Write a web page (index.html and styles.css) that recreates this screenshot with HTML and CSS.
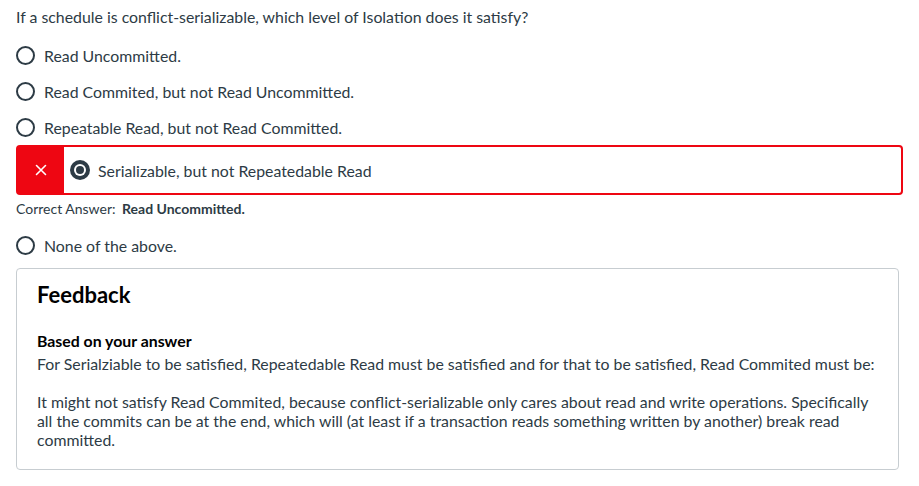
FILE: index.html
```html
<!DOCTYPE html>
<html>
<head>
<meta charset="utf-8">
<link rel="stylesheet" href="styles.css">
</head>
<body>
<div class="quiz">
  <p class="question">If a schedule is conflict-serializable, which level of Isolation does it satisfy?</p>
  <div class="answers">
    <div class="answer">
      <span class="radio"></span><span class="label">Read Uncommitted.</span>
    </div>
    <div class="answer">
      <span class="radio"></span><span class="label">Read Commited, but not Read Uncommitted.</span>
    </div>
    <div class="answer">
      <span class="radio"></span><span class="label">Repeatable Read, but not Read Committed.</span>
    </div>
    <div class="wrong">
      <div class="wrong-flag">
        <svg width="12" height="12" viewBox="0 0 12 12"><path d="M1.5 1.5 L10.5 10.5 M10.5 1.5 L1.5 10.5" stroke="#fff" stroke-width="1.6" stroke-linecap="round"/></svg>
      </div>
      <div class="wrong-body">
        <svg class="radio-on" width="20" height="20" viewBox="0 0 20 20"><circle cx="10" cy="10" r="10" fill="#2d3b45"/><circle cx="10" cy="10" r="6" fill="#fff"/><circle cx="10" cy="10" r="4" fill="#2d3b45"/></svg>
        <span class="label">Serializable, but not Repeatedable Read</span>
      </div>
    </div>
    <div class="correct">Correct Answer: <b>Read Uncommitted.</b></div>
    <div class="answer">
      <span class="radio"></span><span class="label">None of the above.</span>
    </div>
  </div>
  <div class="feedback">
    <h2 class="fb-title">Feedback</h2>
    <div class="fb-sub">Based on your answer</div>
    <p class="fb-text">For Serialziable to be satisfied, Repeatedable Read must be satisfied and for that to be satisfied, Read Commited must be:</p>
    <p class="fb-text fb-gap">It might not satisfy Read Commited, because conflict-serializable only cares about read and write operations. Specifically all the commits can be at the end, which will (at least if a transaction reads something written by another) break read committed.</p>
  </div>
</div>
</body>
</html>
```

FILE: styles.css
```css
* { box-sizing: border-box; }
body {
  margin: 0;
  background: #fff;
  font-family: Lato, "Noto Sans", sans-serif;
  color: #2d3b45;
  font-size: 16px;
}
.quiz {
  padding: 8px 16px 0 16px;
  width: 919px;
}
.question {
  margin: 0;
  font-size: 15.85px;
  line-height: 18px;
}
.answers {
  margin-top: 11px;
}
.answer {
  display: flex;
  align-items: center;
  height: 36px;
}
.radio {
  width: 19px;
  height: 19px;
  border: 2px solid #2d3b45;
  border-radius: 50%;
  flex-shrink: 0;
}
.label {
  margin-left: 9px;
  font-size: 15.85px;
}
.wrong {
  display: flex;
  width: 887px;
  height: 50px;
  border: 2px solid #ee0612;
  border-radius: 4px;
}
.wrong-flag {
  width: 46px;
  background: #ee0612;
  display: flex;
  align-items: center;
  justify-content: center;
}
.wrong-body {
  display: flex;
  align-items: center;
  padding-left: 6px;
}
.wrong-body .label {
  margin-left: 8px;
}
.correct {
  font-size: 14px;
  margin-top: 5px;
  margin-bottom: 9px;
  line-height: 18px;
}
.correct b { margin-left: 3px; }
.feedback {
  margin-top: 5px;
  width: 883px;
  border: 1px solid #c7cdd1;
  border-radius: 4px;
  padding: 13px 12px 20px 20px;
}
.fb-title {
  margin: 0;
  font-size: 22px;
  font-weight: 700;
  color: #000;
  line-height: 26px;
}
.fb-sub {
  margin-top: 23px;
  font-weight: 700;
  font-size: 15.85px;
  color: #000;
  line-height: 19px;
}
.fb-text {
  margin: 4px 0 0 0;
  font-size: 15.85px;
  line-height: 19px;
}
.fb-gap {
  margin-top: 19px;
}
```
